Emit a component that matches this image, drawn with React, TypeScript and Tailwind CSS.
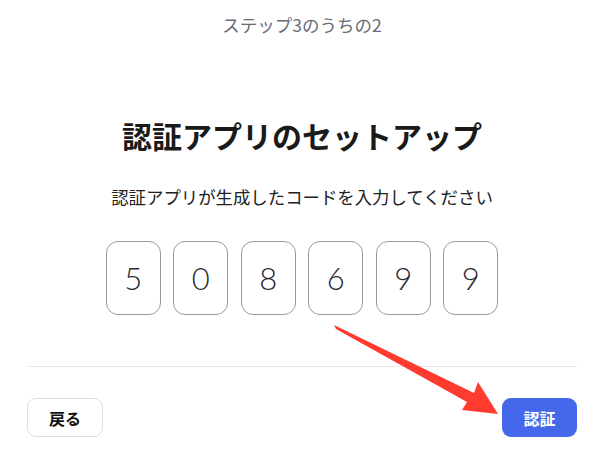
const digits = ["5", "0", "8", "6", "9", "9"];

const jp = "font-['Noto_Sans_CJK_JP','Noto_Sans',sans-serif]";

export default function App() {
  return (
    <div className={`relative h-[453px] w-[604px] overflow-hidden bg-white ${jp}`}>
      <p className="pt-[13px] text-center text-[17.5px] leading-6 text-[#6b6b78]">
        ステップ3のうちの2
      </p>

      <h1 className="mt-[80px] text-center text-[30px] font-bold leading-[36px] text-[#1a1a1a]">
        認証アプリのセットアップ
      </h1>

      <p className="mt-[32px] text-center text-[17.4px] leading-6 text-[#222]">
        認証アプリが生成したコードを入力してください
      </p>

      <div className="mt-[32px] flex justify-center gap-[12.5px]">
        {digits.map((d, i) => (
          <div
            key={i}
            className="flex h-[74px] w-[55px] items-center justify-center rounded-[12px] border border-[#9a9a9e] font-['Lato','Noto_Sans',sans-serif] text-[31px] font-light text-[#2a2a35]"
          >
            {d}
          </div>
        ))}
      </div>

      <div className="mx-[27px] mt-[51px] h-px bg-[#e8e8ec]" />

      <div className="mx-[27px] mt-[31px] flex items-center justify-between">
        <button className="h-[39px] w-[76px] rounded-[9px] border border-[#dcdce4] bg-white text-[16px] font-semibold text-[#111]">
          戻る
        </button>
        <button className="h-[39px] w-[75px] rounded-[9px] bg-[#4568ea] text-[16px] font-bold text-white">
          認証
        </button>
      </div>

      <svg className="pointer-events-none absolute left-0 top-0" width="604" height="453">
        <polygon
          points="334,325 336,329 467,402 462,410 498,414 478,382 474,393"
          fill="#ff3b30"
        />
      </svg>
    </div>
  );
}
